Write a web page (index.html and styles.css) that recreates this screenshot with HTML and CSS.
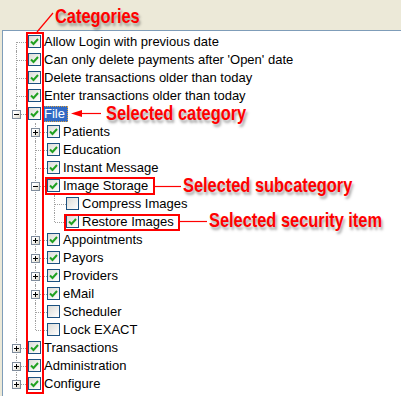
FILE: index.html
```html
<!DOCTYPE html>
<html>
	<head>
		<meta charset="utf-8">
		<title>Security rights</title>
		<link rel="stylesheet" href="styles.css">
	</head>
	<body>
		<div class="tree">
			<ul>
				<li><div class="row"><span class="cb on"><svg width="11" height="11" viewBox="0 0 11 11"><path d="M2 5.5 L4.5 8 L9 3" /></svg></span><span class="label">Allow Login with previous date</span></div></li>
				<li><div class="row"><span class="cb on"><svg width="11" height="11" viewBox="0 0 11 11"><path d="M2 5.5 L4.5 8 L9 3" /></svg></span><span class="label">Can only delete payments after 'Open' date</span></div></li>
				<li><div class="row"><span class="cb on"><svg width="11" height="11" viewBox="0 0 11 11"><path d="M2 5.5 L4.5 8 L9 3" /></svg></span><span class="label">Delete transactions older than today</span></div></li>
				<li><div class="row"><span class="cb on"><svg width="11" height="11" viewBox="0 0 11 11"><path d="M2 5.5 L4.5 8 L9 3" /></svg></span><span class="label">Enter transactions older than today</span></div></li>
				<li>
					<div class="row"><span class="exp"></span><span class="cb on"><svg width="11" height="11" viewBox="0 0 11 11"><path d="M2 5.5 L4.5 8 L9 3" /></svg></span><span class="label sel">File</span></div>
					<ul>
						<li><div class="row"><span class="exp plus"></span><span class="cb on"><svg width="11" height="11" viewBox="0 0 11 11"><path d="M2 5.5 L4.5 8 L9 3" /></svg></span><span class="label">Patients</span></div></li>
						<li><div class="row"><span class="cb on"><svg width="11" height="11" viewBox="0 0 11 11"><path d="M2 5.5 L4.5 8 L9 3" /></svg></span><span class="label">Education</span></div></li>
						<li><div class="row"><span class="cb on"><svg width="11" height="11" viewBox="0 0 11 11"><path d="M2 5.5 L4.5 8 L9 3" /></svg></span><span class="label">Instant Message</span></div></li>
						<li>
							<div class="row"><span class="exp"></span><span class="cb on"><svg width="11" height="11" viewBox="0 0 11 11"><path d="M2 5.5 L4.5 8 L9 3" /></svg></span><span class="label">Image Storage</span></div>
							<ul>
								<li><div class="row"><span class="cb"></span><span class="label">Compress Images</span></div></li>
								<li><div class="row"><span class="cb on"><svg width="11" height="11" viewBox="0 0 11 11"><path d="M2 5.5 L4.5 8 L9 3" /></svg></span><span class="label">Restore Images</span></div></li>
							</ul>
						</li>
						<li><div class="row"><span class="exp plus"></span><span class="cb on"><svg width="11" height="11" viewBox="0 0 11 11"><path d="M2 5.5 L4.5 8 L9 3" /></svg></span><span class="label">Appointments</span></div></li>
						<li><div class="row"><span class="exp plus"></span><span class="cb on"><svg width="11" height="11" viewBox="0 0 11 11"><path d="M2 5.5 L4.5 8 L9 3" /></svg></span><span class="label">Payors</span></div></li>
						<li><div class="row"><span class="exp plus"></span><span class="cb on"><svg width="11" height="11" viewBox="0 0 11 11"><path d="M2 5.5 L4.5 8 L9 3" /></svg></span><span class="label">Providers</span></div></li>
						<li><div class="row"><span class="exp plus"></span><span class="cb on"><svg width="11" height="11" viewBox="0 0 11 11"><path d="M2 5.5 L4.5 8 L9 3" /></svg></span><span class="label">eMail</span></div></li>
						<li><div class="row"><span class="cb"></span><span class="label">Scheduler</span></div></li>
						<li><div class="row"><span class="cb"></span><span class="label">Lock EXACT</span></div></li>
					</ul>
				</li>
				<li><div class="row"><span class="exp plus"></span><span class="cb on"><svg width="11" height="11" viewBox="0 0 11 11"><path d="M2 5.5 L4.5 8 L9 3" /></svg></span><span class="label">Transactions</span></div></li>
				<li><div class="row"><span class="exp plus"></span><span class="cb on"><svg width="11" height="11" viewBox="0 0 11 11"><path d="M2 5.5 L4.5 8 L9 3" /></svg></span><span class="label">Administration</span></div></li>
				<li><div class="row"><span class="exp plus"></span><span class="cb on"><svg width="11" height="11" viewBox="0 0 11 11"><path d="M2 5.5 L4.5 8 L9 3" /></svg></span><span class="label">Configure</span></div></li>
			</ul>
		</div>

		<!-- annotations drawn over the tree -->
		<div class="frame cats"></div>
		<div class="frame sub"></div>
		<div class="frame item"></div>
		<svg class="leaders" width="401" height="396" viewBox="0 0 401 396">
			<line x1="37" y1="32" x2="53" y2="13" />
			<line x1="80" y1="113.5" x2="101" y2="113.5" />
			<polygon points="71,113.5 82,110 82,117" />
			<line x1="155" y1="186.5" x2="181" y2="186.5" />
			<line x1="179" y1="221.5" x2="207" y2="221.5" />
		</svg>
		<div class="note n-cats">Categories</div>
		<div class="note n-cat">Selected category</div>
		<div class="note n-sub">Selected subcategory</div>
		<div class="note n-item">Selected security item</div>
	</body>
</html>
```

FILE: styles.css
```css
* {
	box-sizing: border-box;
}
body {
	margin: 0;
	width: 401px;
	height: 396px;
	overflow: hidden;
	position: relative;
	background-color: #ece9d8;
	font-family: "Liberation Sans", Arial, sans-serif;
}
.tree {
	margin: 30px 0 0 2px;
	height: 366px;
	padding-top: 2px;
	background-color: #fff;
	border-top: 1px solid #7f9db9;
	border-left: 1px solid #7f9db9;
}
.tree ul {
	list-style: none;
	margin: 0;
	padding: 0 0 0 19px;
}
.tree > ul {
	padding-left: 0;
}
.tree li {
	position: relative;
}
/* dotted tree lines */
.tree li::before {
	content: "";
	position: absolute;
	left: 13px;
	top: 0;
	bottom: 0;
	border-left: 1px dotted #a0a0a0;
}
.tree > ul > li:first-child::before {
	top: 9px;
}
.tree li:last-child::before {
	bottom: auto;
	height: 9px;
}
.row {
	position: relative;
	display: flex;
	height: 18px;
	padding-left: 25px;
	font-size: 13px;
	color: #000;
}
.row::before {
	content: "";
	position: absolute;
	left: 14px;
	top: 9px;
	width: 11px;
	border-top: 1px dotted #a0a0a0;
}
.exp {
	position: absolute;
	left: 9px;
	top: 5px;
	width: 9px;
	height: 9px;
	z-index: 1;
	border: 1px solid #7f8c9c;
	background: linear-gradient(135deg, #fff 30%, #d8d4c6);
}
.exp::before {
	content: "";
	position: absolute;
	left: 1px;
	top: 3px;
	width: 5px;
	height: 1px;
	background-color: #000;
}
.exp.plus::after {
	content: "";
	position: absolute;
	left: 3px;
	top: 1px;
	width: 1px;
	height: 5px;
	background-color: #000;
}
.cb {
	flex: none;
	width: 13px;
	height: 13px;
	margin-top: 2px;
	border: 1px solid #1c5180;
	background: linear-gradient(135deg, #dcdcd7, #fff);
}
.cb svg {
	display: block;
}
.cb path {
	fill: none;
	stroke: #21a121;
	stroke-width: 2;
}
.label {
	margin: 1px 0 0 1px;
	height: 16px;
	line-height: 14px;
	padding: 0 2px 0 1px;
	border: 1px dotted transparent;
	white-space: nowrap;
}
.label.sel {
	background-color: #316ac5;
	color: #fff;
	border-color: #d9a040;
}

/* annotations */
.frame {
	position: absolute;
	border: 2px solid #f00;
}
.cats {
	left: 26px;
	top: 32px;
	width: 18px;
	height: 362px;
}
.sub {
	left: 45px;
	top: 177px;
	width: 110px;
	height: 18px;
}
.item {
	left: 64px;
	top: 214px;
	width: 116px;
	height: 17px;
}
.leaders {
	position: absolute;
	left: 0;
	top: 0;
}
.leaders line {
	stroke: #f00;
	stroke-width: 1.2;
}
.leaders polygon {
	fill: #f00;
}
.note {
	position: absolute;
	color: #f00;
	font: bold 21px/20px "Liberation Sans", sans-serif;
	white-space: nowrap;
	text-shadow: 2px 3px 3px rgba(0, 0, 0, 0.35);
	transform: scaleX(0.78);
	transform-origin: 0 0;
}
.n-cats {
	left: 55px;
	top: 6px;
}
.n-cat {
	left: 106px;
	top: 103px;
}
.n-sub {
	left: 183px;
	top: 175px;
}
.n-item {
	left: 209px;
	top: 210px;
}
```
